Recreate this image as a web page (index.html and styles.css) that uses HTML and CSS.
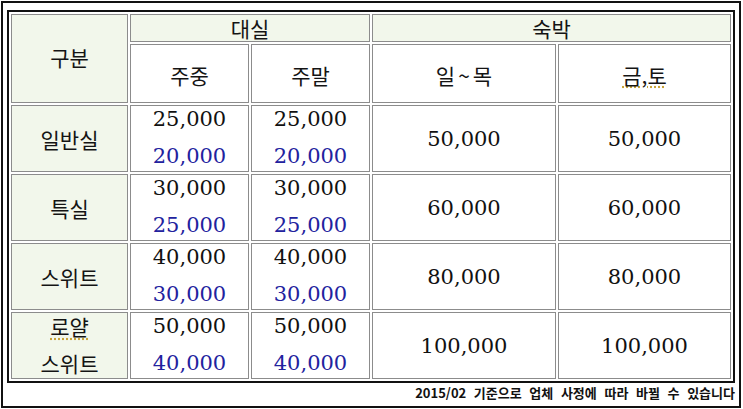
FILE: index.html
```html
<!DOCTYPE html>
<html lang="ko">
<head>
<meta charset="utf-8">
<title>요금표</title>
<link rel="stylesheet" href="styles.css">
</head>
<body>
<div class="frame">
  <div class="rates">
    <div class="cell tint kr corner">구분</div>
    <div class="cell tint kr group-a">대실</div>
    <div class="cell tint kr group-b">숙박</div>
    <div class="cell kr sub">주중</div>
    <div class="cell kr sub">주말</div>
    <div class="cell kr sub">일<span class="tilde">~</span>목</div>
    <div class="cell kr sub"><span class="spell">금,토</span></div>

    <div class="cell tint kr label">일반실</div>
    <div class="cell pair"><span class="num">25,000</span><span class="num sale">20,000</span></div>
    <div class="cell pair"><span class="num">25,000</span><span class="num sale">20,000</span></div>
    <div class="cell num">50,000</div>
    <div class="cell num">50,000</div>

    <div class="cell tint kr label">특실</div>
    <div class="cell pair"><span class="num">30,000</span><span class="num sale">25,000</span></div>
    <div class="cell pair"><span class="num">30,000</span><span class="num sale">25,000</span></div>
    <div class="cell num">60,000</div>
    <div class="cell num">60,000</div>

    <div class="cell tint kr label">스위트</div>
    <div class="cell pair"><span class="num">40,000</span><span class="num sale">30,000</span></div>
    <div class="cell pair"><span class="num">40,000</span><span class="num sale">30,000</span></div>
    <div class="cell num">80,000</div>
    <div class="cell num">80,000</div>

    <div class="cell tint kr pair label2"><span class="spell">로얄</span><span>스위트</span></div>
    <div class="cell pair"><span class="num">50,000</span><span class="num sale">40,000</span></div>
    <div class="cell pair"><span class="num">50,000</span><span class="num sale">40,000</span></div>
    <div class="cell num">100,000</div>
    <div class="cell num">100,000</div>
  </div>
  <p class="note">2015/02 기준으로 업체 사정에 따라 바뀔 수 있습니다</p>
</div>
</body>
</html>
```

FILE: styles.css
```css
html, body {
  margin: 0;
  padding: 0;
  background: #ffffff;
}

.frame {
  margin: 1px;
  width: 740px;
  height: 407px;
  box-sizing: border-box;
  border: 2px solid #111111;
  padding: 7px 4px 0 4px;
}

.rates {
  display: grid;
  grid-template-columns: 117px 119px 119px 184px 173px;
  grid-template-rows: 28px 59px 67px 67px 67px 67px;
  gap: 2px;
  padding: 2px;
  border: 2px solid #111111;
  width: 728px;
  box-sizing: border-box;
  background: #ffffff;
}

.cell {
  border: 1px solid #8c8c8c;
  background: #ffffff;
  display: flex;
  align-items: center;
  justify-content: center;
  color: #141414;
}

.tint {
  background: #f2f7eb;
}

.kr {
  font-family: "Noto Sans CJK KR", "Noto Sans", sans-serif;
  font-size: 21px;
}

.corner {
  grid-row: 1 / 3;
  grid-column: 1;
  padding-bottom: 3px;
}

.group-a {
  grid-column: 2 / 4;
  align-items: flex-end;
  line-height: 26px;
}

.group-b {
  grid-column: 4 / 6;
  align-items: flex-end;
  line-height: 26px;
}

.sub {
  padding-top: 2px;
}

.tilde {
  padding: 0 3px;
}

.num {
  font-family: "DejaVu Serif", "Liberation Serif", serif;
  font-size: 21px;
  color: #111111;
}

.sale {
  color: #22229e;
}

.pair {
  flex-direction: column;
  justify-content: space-between;
  line-height: 26px;
  padding-bottom: 2px;
}

.label2 {
  align-items: center;
}

.spell {
  text-decoration: underline dotted #c9a43a;
  text-underline-offset: 3px;
}

.note {
  margin: 2px 0 0 0;
  text-align: right;
  font-family: "Noto Sans CJK KR", "Noto Sans", sans-serif;
  font-weight: 700;
  font-size: 13px;
  line-height: 15px;
  word-spacing: 4px;
  color: #111111;
}
```
